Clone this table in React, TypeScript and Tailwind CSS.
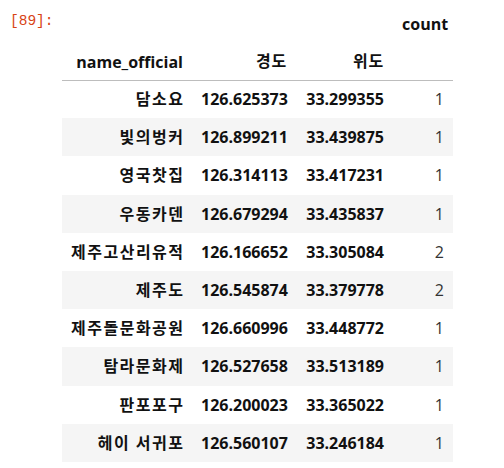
const rows: [string, string, string, number][] = [
  ["담소요", "126.625373", "33.299355", 1],
  ["빛의벙커", "126.899211", "33.439875", 1],
  ["영국찻집", "126.314113", "33.417231", 1],
  ["우동카덴", "126.679294", "33.435837", 1],
  ["제주고산리유적", "126.166652", "33.305084", 2],
  ["제주도", "126.545874", "33.379778", 2],
  ["제주돌문화공원", "126.660996", "33.448772", 1],
  ["탐라문화제", "126.527658", "33.513189", 1],
  ["판포포구", "126.200023", "33.365022", 1],
  ["헤이 서귀포", "126.560107", "33.246184", 1],
];

export default function App() {
  return (
    <div className="relative h-[468px] w-[504px] bg-white font-['Open_Sans','Noto_Sans_CJK_KR',sans-serif] text-[16px] text-[#111]">
      <div className="absolute left-[10px] top-[11px] font-['Liberation_Mono',monospace] text-[14.5px] text-[#d84315]">
        [89]:
      </div>
      <div className="pl-[62px] pt-[5px]">
        <table className="w-[391px] table-fixed border-collapse">
          <colgroup>
            <col className="w-[130px]" />
            <col className="w-[104px]" />
            <col className="w-[97px]" />
            <col className="w-[60px]" />
          </colgroup>
          <thead>
            <tr className="h-[38px]">
              <th />
              <th />
              <th />
              <th className="px-[9px] text-right font-bold">count</th>
            </tr>
            <tr className="h-[37px] border-b border-[#bdbdbd]">
              <th className="px-[9px] pt-[1px] text-right font-bold">name_official</th>
              <th className="px-[9px] text-right font-bold tracking-[0.8px]">경도</th>
              <th className="px-[9px] text-right font-bold tracking-[0.8px]">위도</th>
              <th />
            </tr>
          </thead>
          <tbody>
            {rows.map(([name, lon, lat, count], i) => (
              <tr key={name} className={i % 2 === 1 ? "h-[38.2px] bg-[#f5f5f5]" : "h-[38.2px] bg-white"}>
                <th className="whitespace-nowrap px-[9px] text-right font-bold">
                  <span className="mr-[-1.5px] tracking-[1.5px]">{name}</span>
                </th>
                <th className="px-[9px] text-right font-bold">{lon}</th>
                <th className="px-[9px] text-right font-bold">{lat}</th>
                <td className="px-[9px] text-right text-[#333]">{count}</td>
              </tr>
            ))}
          </tbody>
        </table>
      </div>
    </div>
  );
}
